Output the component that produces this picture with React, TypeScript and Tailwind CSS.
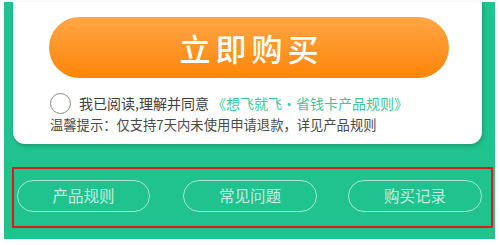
import React from 'react'

const cjk = { fontFamily: '"Noto Sans CJK SC", "Noto Sans", sans-serif' }

function LinkButton({ label, width }: { label: string; width: string }) {
  return (
    <button
      className={`${width} h-[32px] rounded-full border-[1.5px] border-white/60 text-white/75 text-[15.5px] flex items-center justify-center`}
    >
      {label}
    </button>
  )
}

export default function App() {
  return (
    <div className="w-[500px] h-[245px] bg-white overflow-hidden" style={cjk}>
      <div className="ml-[4px] mt-[2px] w-[491px] h-[237px] bg-[#20c28d] flex flex-col">
        {/* 购买卡片 */}
        <div className="ml-[9px] w-[469px] h-[142px] bg-white rounded-b-[12px] shadow-[1px_2px_4px_rgba(0,0,0,0.2)] flex flex-col">
          <div className="ml-[36px] mt-[15px] w-[400px] h-[61px] rounded-full bg-[linear-gradient(180deg,#ffa646_0%,#ff9425_55%,#ff8608_100%)] flex items-center justify-center">
            <span className="text-white text-[31px] font-medium tracking-[5px] pl-[5px] leading-none">立即购买</span>
          </div>
          <div className="ml-[37px] mt-[15px] flex items-center h-[20px]">
            <div className="w-[21px] h-[21px] rounded-full border-[1.5px] border-[#8a8a8a]" />
            <span className="ml-[8px] text-[14px] text-[#3d3d3d] leading-none">
              我已阅读,理解并同意
              <span className="text-[#3cc79a] ml-[3px]">《想飞就飞·省钱卡产品规则》</span>
            </span>
          </div>
          <div className="ml-[37px] mt-[5px] text-[13.3px] text-[#4a4a4a] leading-none">
            温馨提示：仅支持7天内未使用申请退款，详见产品规则
          </div>
        </div>

        {/* 底部链接 */}
        <div className="mt-[23px] ml-[8px] w-[481px] h-[61px] border-2 border-[#e0181c] flex items-start pt-[11px] pl-[3px]">
          <LinkButton label="产品规则" width="w-[133px]" />
          <div className="w-[33px]" />
          <LinkButton label="常见问题" width="w-[134px]" />
          <div className="w-[31px]" />
          <LinkButton label="购买记录" width="w-[134px]" />
        </div>
      </div>
    </div>
  )
}
